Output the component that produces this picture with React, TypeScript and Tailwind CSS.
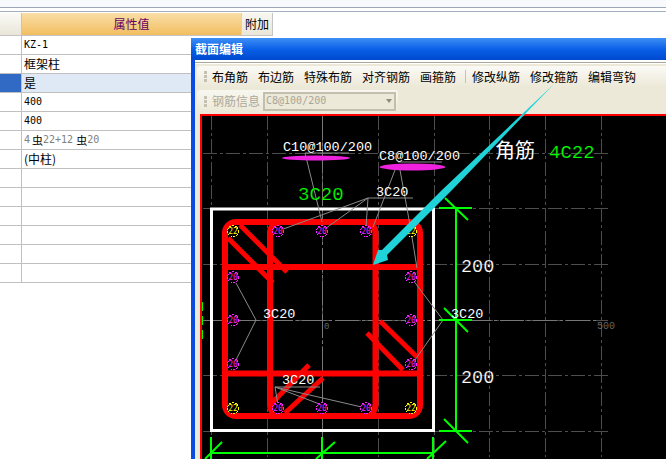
const cjk = "font-['Noto_Sans_CJK_SC','Liberation_Sans',sans-serif]";
const mono = "font-['DejaVu_Sans_Mono','Liberation_Mono',monospace]";

const rows = [
  { text: 'KZ-1' },
  { text: '框架柱' },
  { text: '是', selected: true },
  { text: '400' },
  { text: '400' },
  { rebar: true },
  { text: '(中柱)' },
  {},
  {},
  {},
  {},
  {},
  {},
];

function PropertyTable() {
  return (
    <div className={`w-[666px] ${cjk} text-[12px] leading-none text-black`}>
      <div className="h-[7px] bg-[#f8f9fc]" />
      <div className="h-[4px] border-t border-[#9aa5b5] bg-white" />
      <div className="h-[2px] border-t border-[#a3afc2] bg-white" />
      <div className="flex h-[23px] w-[273px] border-b border-[#c4c4c4]">
        <div className="w-[22px] border-r border-[#c4c4c4] bg-gradient-to-b from-[#fbfaf6] to-[#e9e6d8]" />
        <div className="flex w-[220px] items-center justify-center border-r border-[#d8d4c4] bg-gradient-to-b from-[#f9dfa6] to-[#f2bd5f] text-[#660066]">
          属性值
        </div>
        <div className="flex w-[31px] items-center justify-center border-r border-[#c4c4c4] bg-gradient-to-b from-[#f8f7f0] to-[#e9e6d8]">
          附加
        </div>
      </div>
      {rows.map((r, i) => (
        <div key={i} className="flex h-[19px] border-b border-[#c0c0c0]">
          <div className={`w-[22px] border-r border-[#c0c0c0] ${r.selected ? 'bg-[#316ac5]' : 'bg-white'}`} />
          <div className={`flex flex-1 items-center pl-[2px] ${r.selected ? 'bg-[#dfe8f5]' : 'bg-white'}`}>
            {r.rebar ? (
              <span className={`${mono} flex items-center text-[10px] text-[#808080]`}>
                4<span className={`${cjk} ml-[2px] text-[11px] text-black`}>虫</span>22+12<span className={`${cjk} ml-[3px] text-[11px] text-black`}>虫</span>20
              </span>
            ) : r.text === 'KZ-1' || r.text === '400' ? (
              <span className={`${mono} text-[10px]`}>{r.text}</span>
            ) : (
              r.text
            )}
          </div>
        </div>
      ))}
    </div>
  );
}

function Grip() {
  return (
    <div className="mr-[5px] flex w-[3px] shrink-0 flex-col gap-[1px]">
      <span className="h-[3px] w-[3px] bg-[#c4c1b2]" />
      <span className="h-[3px] w-[3px] bg-[#c4c1b2]" />
      <span className="h-[3px] w-[3px] bg-[#c4c1b2]" />
    </div>
  );
}

const gridX = [211, 267, 322, 378, 434, 489, 545, 601];
const gridY = [153, 208, 264, 320, 375, 431];
const railX = [278, 322, 366];
const railY = [277, 320, 364];

const bars = [
  ...[233, 411].flatMap((x) => [231, 408].map((y) => ({ x, y, label: '22', color: '#ffff00' }))),
  ...railX.flatMap((x) => [231, 408].map((y) => ({ x, y, label: '20', color: '#ff20ff' }))),
  ...[233, 411].flatMap((x) => railY.map((y) => ({ x, y, label: '20', color: '#ff20ff' }))),
];

const leaders = [
  '305,153 349,153',
  '305,153 322,222',
  '398,162 442,162',
  '395,170 373,227',
  '400,170 410,225 417,268',
  '368,198 413,198',
  '368,198 278,231',
  '368,198 322,231',
  '368,198 366,227',
  '256,320 236,283',
  '256,320 235,362',
  '413,280 443,320 415,360',
  '275,387 320,387',
  '275,387 278,405',
  '275,387 322,405',
  '275,387 366,408',
];

const hooks = [
  [240, 225, 287, 272],
  [228, 238, 273, 283],
  [380, 321, 417, 357],
  [367, 333, 403, 370],
  [309, 365, 272, 403],
  [323, 378, 285, 413],
];

const dimTicks = [
  [445, 198, 468, 220],
  [444, 308, 468, 332],
  [444, 419, 468, 443],
  [205, 459, 222, 442],
  [316, 459, 335, 442],
  [427, 459, 446, 441],
];

function SectionDrawing() {
  return (
    <svg width="464" height="343" viewBox="202 116 464 343" className="block bg-black" fontFamily="'Liberation Mono', monospace">
      {/* grid */}
      <g stroke="#4d4d4d" strokeWidth="1" strokeDasharray="14 3 3 3">
        {gridX.map((x) => (
          <line key={x} x1={x + 0.5} y1="116" x2={x + 0.5} y2="457" />
        ))}
        {gridY.map((y) => (
          <line key={y} x1="203" y1={y + 0.5} x2="610" y2={y + 0.5} />
        ))}
      </g>
      <line x1="203" y1="320.5" x2="596" y2="320.5" stroke="#777" strokeDasharray="24 3 3 3" />
      <line x1="322.5" y1="116" x2="322.5" y2="457" stroke="#777" strokeDasharray="24 3 3 3" />
      <text x="324" y="329" fontSize="9" fill="#666">0</text>
      <text x="597" y="329" fontSize="10" fill="#666">500</text>

      {/* column outline */}
      <rect x="211.5" y="209" width="222" height="221.5" fill="none" stroke="#fff" strokeWidth="3" />

      {/* stirrups */}
      <g fill="none" stroke="#ff0000" strokeWidth="6">
        <rect x="225" y="222" width="195" height="194" rx="11" />
        <rect x="270" y="222" width="105.5" height="194" rx="11" />
        <line x1="225" y1="267" x2="420" y2="267" />
        <line x1="225" y1="373.5" x2="420" y2="373.5" />
      </g>
      <g stroke="#ff0000" strokeWidth="5">
        {hooks.map(([x1, y1, x2, y2]) => (
          <line key={`${x1}-${y1}`} x1={x1} y1={y1} x2={x2} y2={y2} />
        ))}
      </g>

      {/* leaders */}
      <g fill="none" stroke="#8a8a8a" strokeWidth="1">
        {leaders.map((p) => (
          <polyline key={p} points={p} />
        ))}
      </g>

      {/* longitudinal bars */}
      {bars.map((b) => (
        <g key={`${b.x}-${b.y}`}>
          <circle cx={b.x} cy={b.y} r="5.5" fill="#000" stroke={b.color} strokeDasharray="2 1" shapeRendering="crispEdges" />
          <text x={b.x} y={b.y + 3} fontSize="8" fontFamily="'DejaVu Sans Mono', monospace" fill={b.color} textAnchor="middle">{b.label}</text>
        </g>
      ))}

      {/* dimensions */}
      <g stroke="#00ff00" strokeWidth="2" fill="none">
        <line x1="456" y1="208" x2="456" y2="431" />
        <line x1="439" y1="208" x2="472" y2="208" />
        <line x1="439" y1="320" x2="472" y2="320" />
        <line x1="439" y1="431" x2="472" y2="431" />
        <line x1="211" y1="453" x2="433" y2="453" />
        <line x1="211" y1="437" x2="211" y2="459" />
        <line x1="322" y1="437" x2="322" y2="459" />
        <line x1="433" y1="437" x2="433" y2="459" />
        {dimTicks.map(([x1, y1, x2, y2]) => (
          <line key={`${x1}-${y1}`} x1={x1} y1={y1} x2={x2} y2={y2} />
        ))}
      </g>
      {/* green dashes lying on the red frame */}
      <line x1="202.5" y1="302" x2="202.5" y2="340" stroke="#00ff00" strokeDasharray="9 5" />

      {/* stirrup callouts */}
      <ellipse cx="316" cy="158" rx="34" ry="2.5" fill="#ee22dd" />
      <ellipse cx="412.5" cy="167" rx="33" ry="3.5" fill="#ee22dd" />

      <g fill="#fff" fontSize="13.5">
        <text x="283" y="151">C10@100/200</text>
        <text x="379" y="160">C8@100/200</text>
        <text x="376" y="196">3C20</text>
        <text x="263" y="318">3C20</text>
        <text x="451" y="318">3C20</text>
        <text x="282" y="384">3C20</text>
      </g>
      {/* large CAD labels: a thin black stroke keeps them hairline like the original */}
      <g stroke="#000" strokeWidth="0.2">
        <text x="298" y="200" fontSize="19" fill="#00ff00">3C20</text>
        <text x="549" y="158" fontSize="19" fill="#00ff00">4C22</text>
        <text x="461" y="272" fontSize="18.5" fill="#fff">200</text>
        <text x="461" y="383" fontSize="18.5" fill="#fff">200</text>
      </g>
      <text x="495" y="158" fontSize="20" fill="#fff" fontFamily="'Noto Sans CJK SC', sans-serif">角筋</text>
    </svg>
  );
}

// annotation arrow, lies over both the toolbar and the drawing
function Arrow() {
  return (
    <svg width="181" height="181" viewBox="373 84 181 181" className="pointer-events-none absolute left-[373px] top-[84px]">
      <polygon points="554,84 452,190 387,255 388,260 373,265 378,250 382,250 442,190" fill="#1fd3d8" />
    </svg>
  );
}

function SectionDialog() {
  const items = ['布角筋', '布边筋', '特殊布筋', '对齐钢筋', '画箍筋'];
  const items2 = ['修改纵筋', '修改箍筋', '编辑弯钩'];
  return (
    <div className={`absolute left-[191px] top-[38px] flex h-[421px] w-[475px] flex-col ${cjk} text-[12px] leading-none`}>
      <div className="flex h-[22px] items-center bg-gradient-to-b from-[#3d8ff5] via-[#0a60e8] to-[#0049cf] pl-[4px] font-bold text-white">
        截面编辑
      </div>
      <div className="flex flex-1 flex-col border-l-[4px] border-[#0a4ce0] bg-[#ece9d8]">
        <div className="h-[2px] bg-white" />
        <div className="h-[1px] bg-[#aca899]" />
        <div className="h-[1px] bg-white" />
        <div className="ml-[2px] mt-[2px] flex h-[21px] items-center rounded-l-[3px] bg-gradient-to-b from-[#fbfaf6] to-[#ece9d8] pl-[7px] text-black">
          <Grip />
          <div className="flex gap-[10px]">
            {items.map((t) => (
              <span key={t}>{t}</span>
            ))}
          </div>
          <span className="ml-[9px] mr-[6px] h-[13px] w-[1px] bg-[#c5c2b2]" />
          <div className="flex gap-[10px]">
            {items2.map((t) => (
              <span key={t}>{t}</span>
            ))}
          </div>
        </div>
        <div className="ml-[2px] mt-[3px] flex h-[22px] w-[201px] items-center rounded-[3px] bg-gradient-to-b from-[#f8f7f0] to-[#ece9d8] pl-[7px] text-[#aca899]">
          <Grip />
          <span className="shrink-0 whitespace-nowrap">钢筋信息</span>
          <div className="ml-[3px] flex h-[19px] w-[133px] shrink-0 items-center border-2 border-[#c3bfae] bg-[#ece9d8] pl-[1px]">
            <span className={`${mono} flex-1 text-[10px] text-[#a8a598]`}>C8@100/200</span>
            <span className="mr-[2px] h-0 w-0 border-x-[3px] border-t-[4px] border-x-transparent border-t-[#8f8c7f]" />
          </div>
        </div>
        <div className="ml-[5px] mt-[2px] flex-1 border-l-2 border-t-2 border-[#ff0000] bg-black">
          <SectionDrawing />
        </div>
      </div>
    </div>
  );
}

export default function App() {
  return (
    <div className="relative h-[459px] w-[666px] overflow-hidden bg-white">
      <PropertyTable />
      <SectionDialog />
      <Arrow />
    </div>
  );
}
